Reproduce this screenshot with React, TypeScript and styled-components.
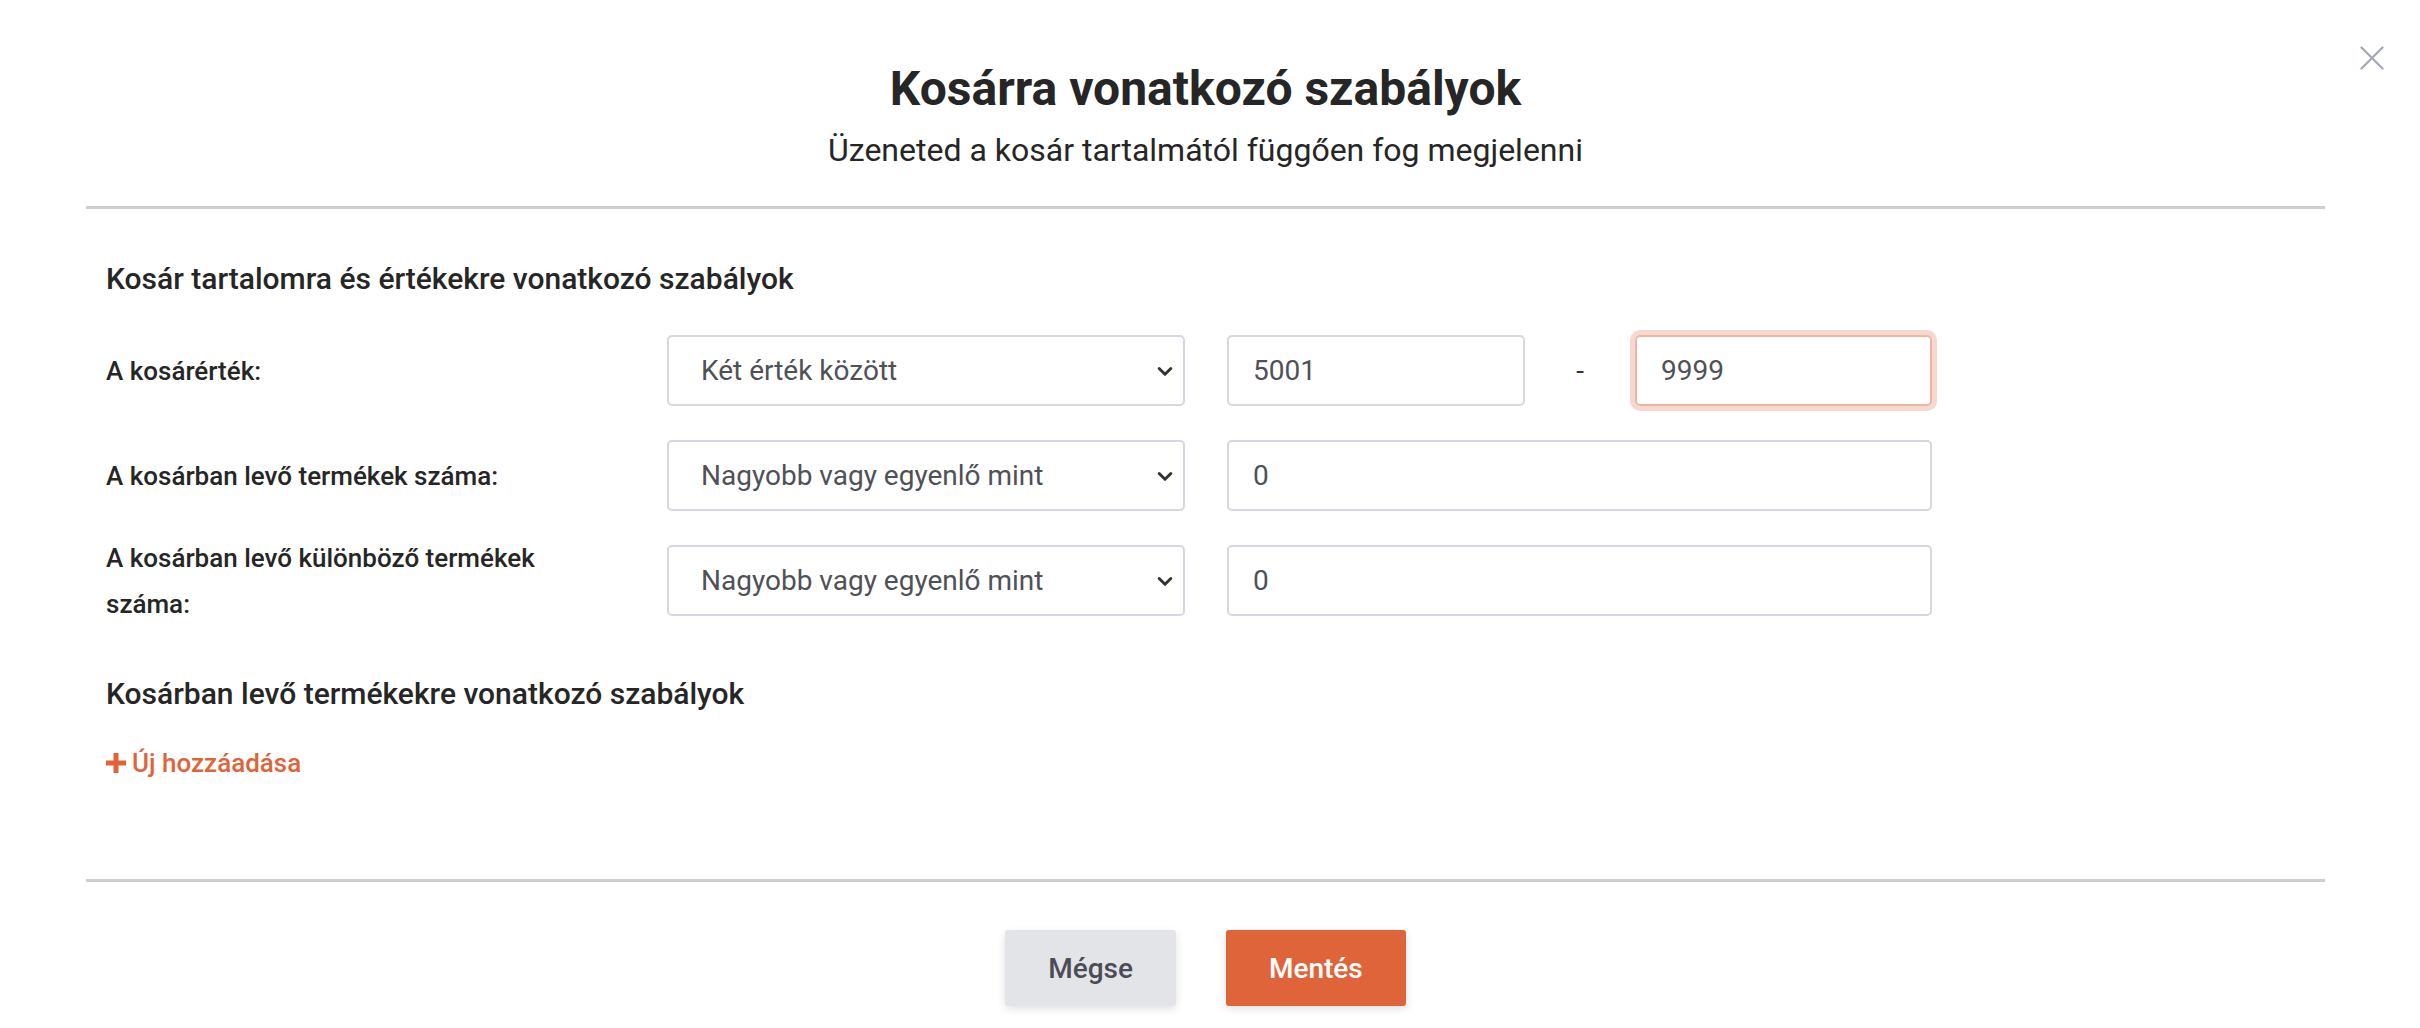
import React from "react";
import styled, { createGlobalStyle } from "styled-components";

const Global = createGlobalStyle`
  html, body { margin: 0; padding: 0; background: #fff; }
  body { font-family: Roboto, "Liberation Sans", sans-serif; color: #222; }
`;

const Page = styled.div`
  position: relative;
  width: 2420px;
  height: 1028px;
  box-sizing: border-box;
  padding: 0 95px 0 86px;
`;

const Close = styled.button`
  position: absolute;
  top: 44px;
  right: 34px;
  border: 0;
  background: none;
  padding: 0;
  cursor: pointer;
`;

const Header = styled.div`
  display: flex;
  flex-direction: column;
  align-items: center;
  padding-top: 62px;
  height: 209px;
  box-sizing: border-box;
  border-bottom: 3px solid #cfcfcf;
`;

const Title = styled.h1`
  margin: 0;
  font-size: 48px;
  font-weight: 700;
  color: #262626;
  line-height: 54px;
`;

const Subtitle = styled.p`
  margin: 16px 0 0;
  font-size: 32px;
  color: #262626;
  line-height: 36px;
`;

const Body = styled.div`
  padding: 52px 20px 0;
  height: 673px;
  box-sizing: border-box;
  border-bottom: 3px solid #cfcfcf;
`;

const SectionTitle = styled.h2`
  margin: 0;
  font-size: 30px;
  font-weight: 500;
  color: #262626;
  line-height: 36px;
`;

const Rows = styled.div`
  display: flex;
  flex-direction: column;
  gap: 34px;
  margin-top: 38px;
  margin-bottom: 60px;
`;

const Row = styled.div`
  display: flex;
  align-items: center;
  height: 71px;
`;

const Label = styled.label<{ $wrap?: boolean }>`
  width: 561px;
  padding-right: ${(p) => (p.$wrap ? 100 : 20)}px;
  box-sizing: border-box;
  font-size: 26px;
  font-weight: 500;
  line-height: 46px;
  color: #262626;
`;

const Field = styled.div<{ $w: number; $focus?: boolean; $select?: boolean }>`
  width: ${(p) => p.$w}px;
  height: 71px;
  box-sizing: border-box;
  border: 2px solid ${(p) => (p.$focus ? "#eeb5a2" : "#d5d8e2")};
  box-shadow: ${(p) => (p.$focus ? "0 0 0 5px #f7d8ce" : "none")};
  border-radius: 5px;
  display: flex;
  align-items: center;
  justify-content: space-between;
  padding: 0 8px 0 ${(p) => (p.$select ? 32 : 24)}px;
  font-size: 28px;
  color: #4f5157;
`;

const Gap = styled.div<{ $w: number }>`
  width: ${(p) => p.$w}px;
  text-align: center;
  font-size: 28px;
  color: #333;
`;

const AddLink = styled.a`
  display: inline-flex;
  align-items: center;
  gap: 6px;
  margin-top: 36px;
  color: #e0643a;
  font-size: 26px;
  font-weight: 500;
  cursor: pointer;
`;

const Footer = styled.div`
  display: flex;
  justify-content: center;
  gap: 50px;
  padding-top: 48px;
`;

const Button = styled.button<{ $primary?: boolean }>`
  height: 76px;
  padding: 0 43px;
  border: 0;
  border-radius: 3px;
  font-family: inherit;
  font-size: 28px;
  font-weight: 500;
  background: ${(p) => (p.$primary ? "#e0643a" : "#e3e4e8")};
  color: ${(p) => (p.$primary ? "#fff" : "#4a4d55")};
  box-shadow: 0 3px 8px rgba(0, 0, 0, 0.12);
`;

const Chevron = () => (
  <svg width="20" height="20" viewBox="0 0 24 24" fill="none" stroke="#333" strokeWidth="3.5" strokeLinecap="round" strokeLinejoin="round">
    <polyline points="5 9 12 16 19 9" />
  </svg>
);

export default function App() {
  return (
    <>
      <Global />
      <Page>
        <Close aria-label="close">
          <svg width="28" height="28" viewBox="0 0 24 24" fill="none" stroke="#a4a9ba" strokeWidth="2" strokeLinecap="round">
            <line x1="3" y1="3" x2="21" y2="21" />
            <line x1="21" y1="3" x2="3" y2="21" />
          </svg>
        </Close>
        <Header>
          <Title>Kosárra vonatkozó szabályok</Title>
          <Subtitle>Üzeneted a kosár tartalmától függően fog megjelenni</Subtitle>
        </Header>
        <Body>
          <SectionTitle>Kosár tartalomra és értékekre vonatkozó szabályok</SectionTitle>
          <Rows>
            <Row>
              <Label>A kosárérték:</Label>
              <Field $w={518} $select>Két érték között<Chevron /></Field>
              <Gap $w={42} />
              <Field $w={298}>5001</Field>
              <Gap $w={110}>-</Gap>
              <Field $w={297} $focus>9999</Field>
            </Row>
            <Row>
              <Label>A kosárban levő termékek száma:</Label>
              <Field $w={518} $select>Nagyobb vagy egyenlő mint<Chevron /></Field>
              <Gap $w={42} />
              <Field $w={705}>0</Field>
            </Row>
            <Row>
              <Label $wrap>A kosárban levő különböző termékek száma:</Label>
              <Field $w={518} $select>Nagyobb vagy egyenlő mint<Chevron /></Field>
              <Gap $w={42} />
              <Field $w={705}>0</Field>
            </Row>
          </Rows>
          <SectionTitle>Kosárban levő termékekre vonatkozó szabályok</SectionTitle>
          <AddLink>
            <svg width="20" height="20" viewBox="0 0 20 20"><path d="M7.5 0h5v7.5H20v5h-7.5V20h-5v-7.5H0v-5h7.5z" fill="#e0643a" /></svg>
            Új hozzáadása
          </AddLink>
        </Body>
        <Footer>
          <Button>Mégse</Button>
          <Button $primary>Mentés</Button>
        </Footer>
      </Page>
    </>
  );
}
